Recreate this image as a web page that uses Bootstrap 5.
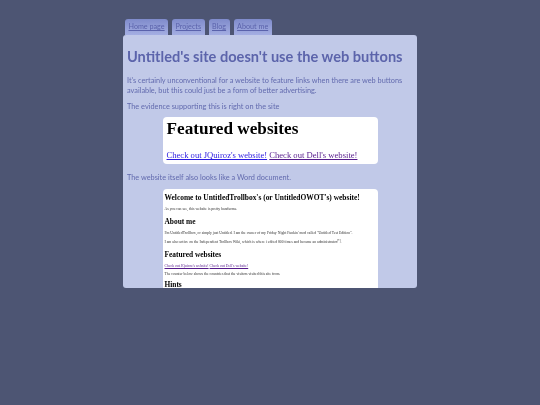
<!DOCTYPE html>
<html lang="en">
<head>
<meta charset="utf-8">
<title>Untitled's site</title>
<link href="https://cdn.jsdelivr.net/npm/bootstrap@5.3.0/dist/css/bootstrap.min.css" rel="stylesheet">
<style>
html,body{height:100%;overflow:hidden}
body{background:#4d5573;font-family:"Lato","Noto Sans",sans-serif;color:#626aae;filter:blur(.35px)}
.site-wrap{width:294px;padding-top:19px}
.tab-row{gap:4px;padding-left:2px}
.tab-row .nav-link{padding:3px 3.5px 0;height:16px;font-size:7.2px;line-height:10px;color:#5a62ab;text-decoration:underline;border-radius:3px 3px 0 0;background:linear-gradient(#7f8bcb,#a4aee2)}
.site-panel{height:253px;overflow:hidden;background:#c1c9e8;border-radius:3px;padding:0 4px}
.site-panel h1{font-size:14.6px;font-weight:700;line-height:20px;margin:12px 0 9px;color:#5c64ab;white-space:nowrap}
.site-panel p.say{font-size:7.33px;line-height:10px;margin:0 0 6px}
.site-panel p.say.tight{margin-bottom:5px}
.shot{width:215px;margin:0 auto;background:#fff;border-radius:4px;font-family:"Liberation Serif",serif;color:#000;overflow:hidden}
.shot-a{height:47px;padding:2px 4px;margin-bottom:9px}
.shot-a h2{font-size:17.2px;font-weight:700;line-height:20px;margin:0 0 10px}
.shot-a div{font-size:8.6px;line-height:13px;white-space:nowrap}
.shot a{color:#551a8b}
.shot a.fresh{color:#2a1ae0}
.shot-b{height:110px;padding:3px 2px}
.shot-b h3{font-size:7.45px;font-weight:700;line-height:12px;margin:0 0 3px;white-space:nowrap}
.shot-b h4{font-size:7.4px;font-weight:700;line-height:10px;margin:0 0 4px}
.shot-b p{font-size:3.78px;line-height:5px;margin:0 0 4px;white-space:nowrap;color:#333}
.shot-b p.last{margin-bottom:5px}
.shot-b p.snug{margin-bottom:3px}
.shot-b sup{font-size:3px}
</style>
</head>
<body>
<div class="site-wrap mx-auto">
  <ul class="nav tab-row">
    <li class="nav-item"><a class="nav-link" href="#">Home page</a></li>
    <li class="nav-item"><a class="nav-link" href="#">Projects</a></li>
    <li class="nav-item"><a class="nav-link" href="#">Blog</a></li>
    <li class="nav-item"><a class="nav-link" href="#">About me</a></li>
  </ul>
  <main class="site-panel">
    <h1>Untitled's site doesn't use the web buttons</h1>
    <p class="say">It's certainly unconventional for a website to feature links when there are web buttons available, but this could just be a form of better advertising.</p>
    <p class="say tight">The evidence supporting this is right on the site</p>
    <div class="shot shot-a">
      <h2>Featured websites</h2>
      <div><a class="fresh" href="#">Check out JQuiroz's website!</a> <a href="#">Check out Dell's website!</a></div>
    </div>
    <p class="say">The website itself also looks like a Word document.</p>
    <div class="shot shot-b">
      <h3>Welcome to UntitledTrollbox's (or UntitledOWOT's) website!</h3>
      <p class="last">As you can see, this website is pretty handsome.</p>
      <h4>About me</h4>
      <p>I'm UntitledTrollbox, or simply just Untitled. I am the owner of my Friday Night Funkin' mod called "Untitled Test Edition".</p>
      <p class="last">I am also active on the Independent Trollbox Wiki, which is where i edited 800 times and became an administrator<sup>[*]</sup>.</p>
      <h4>Featured websites</h4>
      <p class="snug"><a href="#">Check out JQuiroz's website!</a> <a href="#">Check out Dell's website!</a></p>
      <p class="snug">The counter below shows the countries that the visitors visited this site from.</p>
      <h4>Hints</h4>
    </div>
  </main>
</div>
<script src="https://cdn.jsdelivr.net/npm/bootstrap@5.3.0/dist/js/bootstrap.bundle.min.js"></script>
</body>
</html>
